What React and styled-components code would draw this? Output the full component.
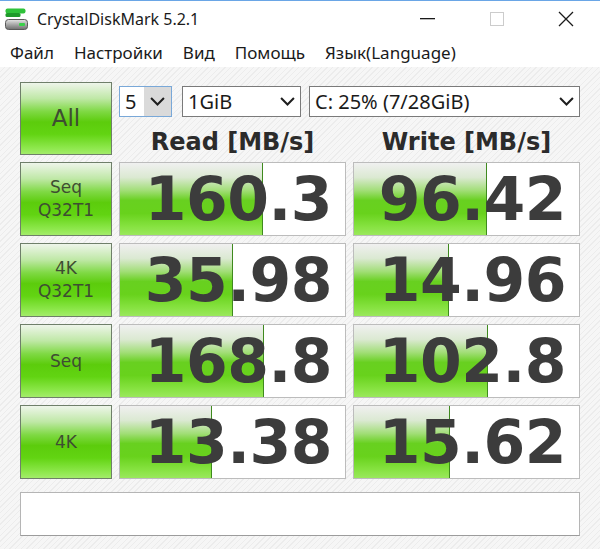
import React from 'react';
import styled, { createGlobalStyle } from 'styled-components';

const GlobalStyle = createGlobalStyle`
  html, body {
    margin: 0;
    padding: 0;
    background: #ffffff;
  }
  #root {
    width: 600px;
    height: 549px;
  }
`;

const Window = styled.div`
  width: 600px;
  height: 549px;
  display: flex;
  flex-direction: column;
  box-sizing: border-box;
  border-top: 1px solid #6aa6e6;
  background: #ffffff;
  overflow: hidden;
`;

const TitleBar = styled.div`
  height: 36px;
  display: flex;
  align-items: center;
  padding-left: 5px;
  background: #ffffff;
`;

const TitleText = styled.span`
  font-family: "Noto Sans", "Open Sans", sans-serif;
  font-size: 16px;
  color: #1a1a1a;
  margin-left: 8px;
  flex: 1;
`;

const Controls = styled.div`
  display: flex;
  align-items: center;
  height: 100%;
`;

const ControlButton = styled.div`
  width: 69px;
  height: 100%;
  display: flex;
  align-items: center;
  justify-content: center;
`;

const MenuBar = styled.div`
  height: 30px;
  display: flex;
  align-items: center;
  padding-left: 10px;
  gap: 20px;
  background: #ffffff;
`;

const MenuItem = styled.span`
  font-family: "Noto Sans", "Open Sans", sans-serif;
  font-size: 17px;
  color: #1a1a1a;
`;

const Content = styled.div`
  flex: 1;
  padding: 15px 20px 0 20px;
  background-color: #f4f4f4;
  background-image: repeating-linear-gradient(
    135deg,
    #f6f6f6 0px,
    #f6f6f6 3px,
    #ececec 3px,
    #ececec 4px
  );
`;

const Grid = styled.div`
  display: grid;
  grid-template-columns: 92px 227px 227px;
  grid-template-rows: 73px repeat(4, 74px);
  column-gap: 7px;
  row-gap: 7px;
`;

const GreenButton = styled.div`
  box-sizing: border-box;
  border: 1px solid #6f7f6a;
  background: linear-gradient(
    to bottom,
    #eef5ea 0%,
    #bfe8a6 22%,
    #7fd944 40%,
    #5ccc0c 55%,
    #62d412 72%,
    #8fe84e 92%,
    #a3ec6a 100%
  );
  display: flex;
  flex-direction: column;
  align-items: center;
  justify-content: center;
  font-family: "DejaVu Sans", Verdana, sans-serif;
  font-size: ${props => (props.big ? 23 : 17)}px;
  line-height: ${props => (props.big ? 1 : 1.35)};
  color: #3e4d32;
  text-align: center;
`;

const TopArea = styled.div`
  grid-column: 2 / span 2;
  display: flex;
  flex-direction: column;
`;

const SelectRow = styled.div`
  display: flex;
  margin-top: 4px;
  height: 31px;
`;

const Select = styled.div`
  box-sizing: border-box;
  width: ${props => props.w}px;
  margin-right: ${props => props.mr || 0}px;
  height: 31px;
  border: 1px solid ${props => (props.focused ? '#79a8d8' : '#7a7a7a')};
  background: #ffffff;
  display: flex;
  align-items: center;
  font-family: "Noto Sans", "Open Sans", sans-serif;
  font-size: 20px;
  color: #1a1a1a;
`;

const SelectText = styled.span`
  flex: 1;
  padding-left: 5px;
  white-space: nowrap;
`;

const Arrow = styled.span`
  width: ${props => props.w || 26}px;
  height: 100%;
  display: flex;
  align-items: center;
  justify-content: center;
  background: ${props => (props.hover ? '#dadada' : 'transparent')};
`;

const HeaderRow = styled.div`
  flex: 1;
  display: grid;
  grid-template-columns: 227px 227px;
  column-gap: 7px;
  align-items: center;
`;

const Header = styled.div`
  text-align: center;
  font-family: "DejaVu Sans", Verdana, sans-serif;
  font-weight: bold;
  font-size: 24px;
  color: #2b2b2b;
  padding-top: 11px;
`;

const Cell = styled.div`
  position: relative;
  box-sizing: border-box;
  border: 1px solid #bcbcbc;
  background: #ffffff;
  overflow: hidden;
`;

const Bar = styled.div`
  position: absolute;
  left: 0;
  top: 0;
  bottom: 0;
  box-sizing: border-box;
  border-right: 1px solid #3f8a1e;
  background: linear-gradient(
    to bottom,
    #f0f0f0 0%,
    #dbe9d2 20%,
    #a2de78 38%,
    #68d020 52%,
    #68d21c 70%,
    #86e240 88%,
    #9ae85c 100%
  );
`;

const Value = styled.div`
  position: relative;
  height: 100%;
  display: flex;
  align-items: center;
  justify-content: flex-end;
  padding-right: 13px;
  font-family: "DejaVu Sans", Verdana, sans-serif;
  font-weight: bold;
  font-size: 60px;
  letter-spacing: -0.5px;
  color: #3c3c3c;
`;

const StatusBox = styled.div`
  margin-top: 13px;
  height: 44px;
  box-sizing: border-box;
  border: 1px solid #b5b5b5;
  border-bottom-color: #9c9c9c;
  background: #ffffff;
`;

const AppIcon = () => (
  <svg width="24" height="23" viewBox="0 0 24 23">
    <defs>
      <linearGradient id="disk" x1="0" y1="0" x2="0" y2="1">
        <stop offset="0" stopColor="#e6e6e6" />
        <stop offset="0.5" stopColor="#a8a8a8" />
        <stop offset="1" stopColor="#6e6e6e" />
      </linearGradient>
    </defs>
    <rect x="0.5" y="0.5" width="20" height="5" rx="2" fill="#2fc23a" />
    <rect x="0.5" y="5" width="15" height="4" rx="1.5" fill="#1e9a2a" />
    <rect x="0.5" y="11.5" width="22" height="10" rx="3" fill="url(#disk)" stroke="#5a5a5a" strokeWidth="1" />
    <rect x="14" y="15" width="6" height="3" rx="1" fill="#3ad14a" />
  </svg>
);

const Chevron = ({ size = 15 }) => (
  <svg width={size} height={size * 0.6} viewBox="0 0 14 8.4">
    <path d="M1 1 L7 7 L13 1" fill="none" stroke="#1e1e1e" strokeWidth="1.9" />
  </svg>
);

const tests = [
  { label: ['Seq', 'Q32T1'], read: '160.3', write: '96.42' },
  { label: ['4K', 'Q32T1'], read: '35.98', write: '14.96' },
  { label: ['Seq'], read: '168.8', write: '102.8' },
  { label: ['4K'], read: '13.38', write: '15.62' },
];

// log scale meter like the original
const meter = v => Math.max(0, Math.min(1, (Math.log10(parseFloat(v)) + 0.85) / 4.81));

const ScoreCell = ({ value }) => (
  <Cell>
    <Bar style={{ width: `${meter(value) * 100}%` }} />
    <Value>{value}</Value>
  </Cell>
);

const App = () => (
  <>
    <GlobalStyle />
    <Window>
      <TitleBar>
        <AppIcon />
        <TitleText>CrystalDiskMark 5.2.1</TitleText>
        <Controls>
          <ControlButton>
            <svg width="15" height="2"><rect width="15" height="1.3" fill="#1a1a1a" /></svg>
          </ControlButton>
          <ControlButton>
            <svg width="14" height="14"><rect x="0.5" y="0.5" width="13" height="13" fill="none" stroke="#cccccc" /></svg>
          </ControlButton>
          <ControlButton>
            <svg width="16" height="16"><path d="M1 1 L15 15 M15 1 L1 15" stroke="#1a1a1a" strokeWidth="1.3" /></svg>
          </ControlButton>
        </Controls>
      </TitleBar>
      <MenuBar>
        <MenuItem>Файл</MenuItem>
        <MenuItem>Настройки</MenuItem>
        <MenuItem>Вид</MenuItem>
        <MenuItem>Помощь</MenuItem>
        <MenuItem>Язык(Language)</MenuItem>
      </MenuBar>
      <Content>
        <Grid>
          <GreenButton big>All</GreenButton>
          <TopArea>
            <SelectRow>
              <Select w={53} mr={10} focused>
                <SelectText>5</SelectText>
                <Arrow hover w={27}><Chevron /></Arrow>
              </Select>
              <Select w={119} mr={8}>
                <SelectText>1GiB</SelectText>
                <Arrow><Chevron /></Arrow>
              </Select>
              <Select w={271}>
                <SelectText>C: 25% (7/28GiB)</SelectText>
                <Arrow><Chevron /></Arrow>
              </Select>
            </SelectRow>
            <HeaderRow>
              <Header>Read [MB/s]</Header>
              <Header>Write [MB/s]</Header>
            </HeaderRow>
          </TopArea>
          {tests.map(t => (
            <React.Fragment key={t.label.join(' ') + t.read}>
              <GreenButton>
                {t.label.map(l => <span key={l}>{l}</span>)}
              </GreenButton>
              <ScoreCell value={t.read} />
              <ScoreCell value={t.write} />
            </React.Fragment>
          ))}
        </Grid>
        <StatusBox />
      </Content>
    </Window>
  </>
);

export default App;
